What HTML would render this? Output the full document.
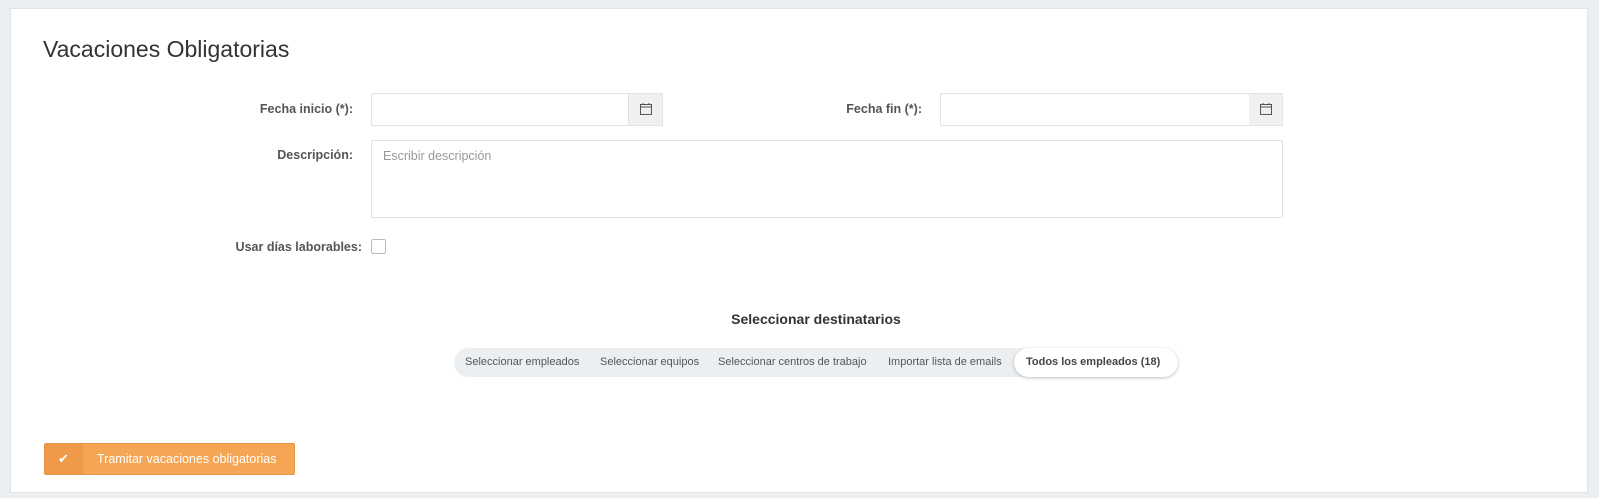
<!DOCTYPE html>
<html><head><meta charset="utf-8"><style>
*{box-sizing:border-box;margin:0;padding:0}
body{width:1599px;height:498px;background:#eceff1;font-family:"Liberation Sans",sans-serif;color:#555;position:relative;overflow:hidden}
.card{position:absolute;left:10px;top:8px;width:1578px;height:485px;background:#fff;border:1px solid #e0e3e6}
.a{position:absolute}
.title{left:43px;top:36px;font-size:23px;color:#333;font-weight:normal}
.lbl{font-size:12.5px;font-weight:bold;color:#555;text-align:right}
.inp{border:1px solid #dfe2e5;background:#fff;border-radius:2px 0 0 2px}
.add{background:#eef0f2;border:1px solid #e2e5e8;border-left:none}
.tabs{left:454px;top:348px;width:724px;height:29px;background:#eceff1;border-radius:15px;font-size:11px;color:#555}
.tabs span{position:absolute;top:8px;white-space:nowrap}
.act{position:absolute;left:560px;top:0;width:164px;height:29px;background:#fff;border-radius:15px;box-shadow:0 1px 3px rgba(0,0,0,.25)}
</style></head><body>
<div class="card"></div>
<div class="a title">Vacaciones Obligatorias</div>
<div class="a lbl" style="left:200px;width:153px;top:102px">Fecha inicio (*):</div>
<div class="a inp" style="left:371px;top:93px;width:258px;height:33px"></div>
<div class="a add" style="left:629px;top:93px;width:34px;height:33px"><svg width="34" height="31" viewBox="0 0 34 31"><rect x="11.5" y="10.5" width="11" height="10" fill="none" stroke="#555"/><line x1="11.5" y1="13" x2="22.5" y2="13" stroke="#555"/><line x1="14" y1="9" x2="14" y2="11" stroke="#555"/><line x1="20" y1="9" x2="20" y2="11" stroke="#555"/></svg></div>
<div class="a lbl" style="left:770px;width:152px;top:102px">Fecha fin (*):</div>
<div class="a inp" style="left:940px;top:93px;width:310px;height:33px"></div>
<div class="a add" style="left:1249px;top:93px;width:34px;height:33px"><svg width="34" height="31" viewBox="0 0 34 31"><rect x="11.5" y="10.5" width="11" height="10" fill="none" stroke="#555"/><line x1="11.5" y1="13" x2="22.5" y2="13" stroke="#555"/><line x1="14" y1="9" x2="14" y2="11" stroke="#555"/><line x1="20" y1="9" x2="20" y2="11" stroke="#555"/></svg></div>
<div class="a lbl" style="left:200px;width:153px;top:148px">Descripción:</div>
<div class="a inp" style="left:371px;top:140px;width:912px;height:78px;border-radius:2px;font-size:12.5px;color:#999;padding:8px 11px">Escribir descripción</div>
<div class="a lbl" style="left:200px;width:162px;top:240px">Usar días laborables:</div>
<div class="a" style="left:371px;top:239px;width:15px;height:15px;border:1px solid #bbb;border-radius:2px"></div>
<div class="a" style="left:0;width:1632px;top:311px;text-align:center;font-size:14px;font-weight:bold;color:#333">Seleccionar destinatarios</div>
<div class="a tabs"><div class="act"></div>
<span style="left:11px">Seleccionar empleados</span>
<span style="left:146px">Seleccionar equipos</span>
<span style="left:264px">Seleccionar centros de trabajo</span>
<span style="left:434px">Importar lista de emails</span>
<span style="left:572px;font-weight:bold;color:#444">Todos los empleados (18)</span></div>
<div class="a" style="left:44px;top:443px;width:251px;height:32px;background:#f5a655;border:1px solid #e8954a;border-radius:2px;color:#fff;font-size:12.5px">
<div class="a" style="left:0;top:0;width:38px;height:30px;background:#ee9a48"></div>
<span class="a" style="left:13px;top:7px;font-size:13px">✔</span>
<span class="a" style="left:52px;top:8px;white-space:nowrap">Tramitar vacaciones obligatorias</span></div>
</body></html>
